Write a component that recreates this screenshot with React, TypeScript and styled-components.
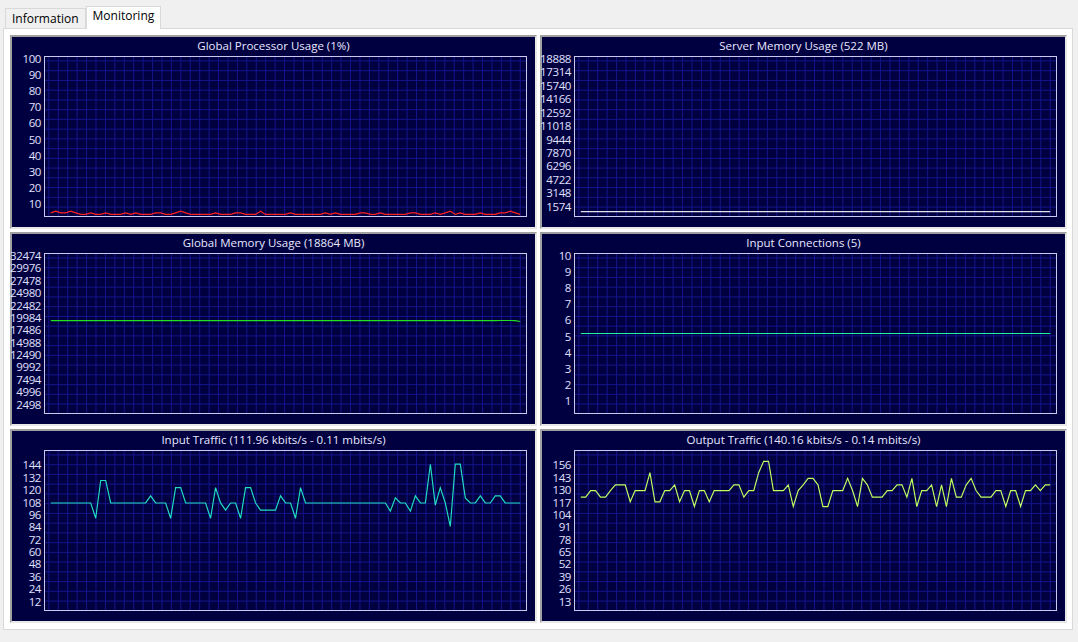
import React from 'react';
import styled, { createGlobalStyle } from 'styled-components';

const Global = createGlobalStyle`
  html, body { margin: 0; background: #f0f0f0; }
  body { font-family: "Open Sans", "Liberation Sans", sans-serif; }
`;

interface ChartDef {
  title: string;
  labels: string[];
  max: number;
  color: string;
  data: number[];
}

const inputTraffic = [105,105,105,105,105,105,105,105,105,90,127,127,105,105,105,105,105,105,105,105,112,105,105,105,90,120,120,105,105,105,105,105,90,120,105,98,105,105,90,120,120,105,98,98,98,98,112,105,105,90,120,105,105,105,105,105,105,105,105,105,105,105,105,105,105,105,105,105,97,110,105,105,97,112,105,105,143,103,120,105,82,143,143,110,105,105,112,105,105,112,112,105,105,105,105];
const outputTraffic = [120,120,127,127,120,120,127,133,133,133,115,127,127,127,146,115,115,127,127,133,115,127,127,110,127,127,115,127,127,127,127,133,133,120,127,127,146,158,158,127,127,127,133,110,127,133,140,140,133,110,110,127,127,127,140,127,110,140,133,120,120,120,127,127,133,133,120,140,110,127,127,133,110,133,110,140,120,120,133,140,127,120,120,120,127,127,110,127,127,110,127,127,133,127,133,133];
const cpu = [2,3,2,2,3,2,1,1,2,1,1,2,1,1,1,2,1,2,1,1,1,2,2,1,1,2,3,2,1,1,1,1,1,2,1,1,1,2,2,1,1,1,3,1,1,1,1,1,2,1,1,1,1,1,1,2,1,2,1,1,1,1,2,2,1,1,2,1,1,1,1,1,2,2,1,1,1,2,1,2,3,1,2,1,1,1,2,1,1,1,2,2,3,2,1];

const charts: ChartDef[] = [
  { title: 'Global Processor Usage (1%)', labels: ['100','90','80','70','60','50','40','30','20','10'], max: 100, color: '#ff2020', data: cpu },
  { title: 'Server Memory Usage (522 MB)', labels: ['18888','17314','15740','14166','12592','11018','9444','7870','6296','4722','3148','1574'], max: 18888, color: '#e0e0f0', data: [522, 522] },
  { title: 'Global Memory Usage (18864 MB)', labels: ['32474','29976','27478','24980','22482','19984','17486','14988','12490','9992','7494','4996','2498'], max: 32474, color: '#20e020', data: [...Array(90).fill(18864), 18900, 18900, 18900, 18864, 18700] },
  { title: 'Input Connections (5)', labels: ['10','9','8','7','6','5','4','3','2','1'], max: 10, color: '#20f0a0', data: [5, 5] },
  { title: 'Input Traffic (111.96 kbits/s - 0.11 mbits/s)', labels: ['144','132','120','108','96','84','72','60','48','36','24','12'], max: 156, color: '#20e0c0', data: inputTraffic },
  { title: 'Output Traffic (140.16 kbits/s - 0.14 mbits/s)', labels: ['156','143','130','117','104','91','78','65','52','39','26','13'], max: 169, color: '#c0ff60', data: outputTraffic },
];

function Chart({ def }: { def: ChartDef }) {
  const w = 500, h = 160;
  const n = def.data.length;
  const pts = def.data.map((v, i) => {
    const x = 6 + (i / (n - 1)) * (w - 12);
    const y = h - (v / def.max) * h;
    return `${x.toFixed(1)},${y.toFixed(1)}`;
  }).join(' ');
  const cols = Array.from({ length: 60 }, (_, i) => i * 9.8 + 4);
  const rows = Array.from({ length: 20 }, (_, i) => i * 9.8 + 4);
  return (
    <Panel>
      <Title>{def.title}</Title>
      <Body>
        <Axis>
          {def.labels.map(l => (
            <Tick key={l} style={{ top: `${((def.max - Number(l)) / def.max) * 100}%` }}>{l}</Tick>
          ))}
        </Axis>
        <Plot>
          <svg width="100%" height="100%" viewBox={`0 0 ${w} ${h}`} preserveAspectRatio="none">
            {cols.map(x => <line key={'c' + x} x1={x} x2={x} y1={0} y2={h} stroke="#14148c" strokeWidth={1} />)}
            {rows.map(y => <line key={'r' + y} x1={0} x2={w} y1={y} y2={y} stroke="#14148c" strokeWidth={1} />)}
            <polyline points={pts} fill="none" stroke={def.color} strokeWidth={1.2} />
          </svg>
        </Plot>
      </Body>
    </Panel>
  );
}

export default function App() {
  return (
    <>
      <Global />
      <Page>
        <Tabs>
          <Tab>Information</Tab>
          <Tab active>Monitoring</Tab>
        </Tabs>
        <Content>
          <Grid>
            {charts.map(c => <Chart key={c.title} def={c} />)}
          </Grid>
        </Content>
      </Page>
    </>
  );
}

const Page = styled.div`
  width: 1078px;
  height: 642px;
  padding: 6px 5px 0 3px;
  box-sizing: border-box;
`;

const Tabs = styled.div`
  display: flex;
  align-items: flex-end;
  height: 22px;
  padding-left: 2px;
`;

const Tab = styled.div<{ active?: boolean }>`
  font-size: 12px;
  color: #000;
  padding: 0 6px;
  height: ${p => (p.active ? 22 : 19)}px;
  line-height: ${p => (p.active ? 18 : 19)}px;
  background: ${p => (p.active ? '#ffffff' : '#f0f0f0')};
  border: 1px solid #d9d9d9;
  border-bottom: none;
  margin-bottom: ${p => (p.active ? -1 : 0)}px;
  position: relative;
`;

const Content = styled.div`
  background: #ffffff;
  border: 1px solid #d9d9d9;
  height: 602px;
  padding: 6px 5px 6px 6px;
  box-sizing: border-box;
`;

const Grid = styled.div`
  display: grid;
  grid-template-columns: 1fr 1fr;
  grid-template-rows: 1fr 1fr 1fr;
  gap: 3px;
  height: 100%;
`;

const Panel = styled.div`
  background: #000040;
  border: 2px solid;
  border-color: #a0a0a0 #e8e8e8 #e8e8e8 #a0a0a0;
  display: flex;
  flex-direction: column;
  padding: 0 8px 10px 0;
  box-sizing: border-box;
  min-height: 0;
`;

const Title = styled.div`
  color: #e8e8ff;
  font-size: 11.5px;
  text-align: center;
  height: 19px;
  line-height: 18px;
  padding-left: 8px;
`;

const Body = styled.div`
  flex: 1;
  display: flex;
  min-height: 0;
`;

const Axis = styled.div`
  width: 32px;
  position: relative;
  flex: none;
`;

const Tick = styled.div`
  position: absolute;
  right: 3px;
  transform: translateY(-3px);
  color: #e0e0ff;
  font-size: 11.5px;
  line-height: 12px;
  letter-spacing: -0.4px;
`;

const Plot = styled.div`
  flex: 1;
  border: 1px solid #c8c8f0;
  min-width: 0;
  svg { display: block; }
`;
